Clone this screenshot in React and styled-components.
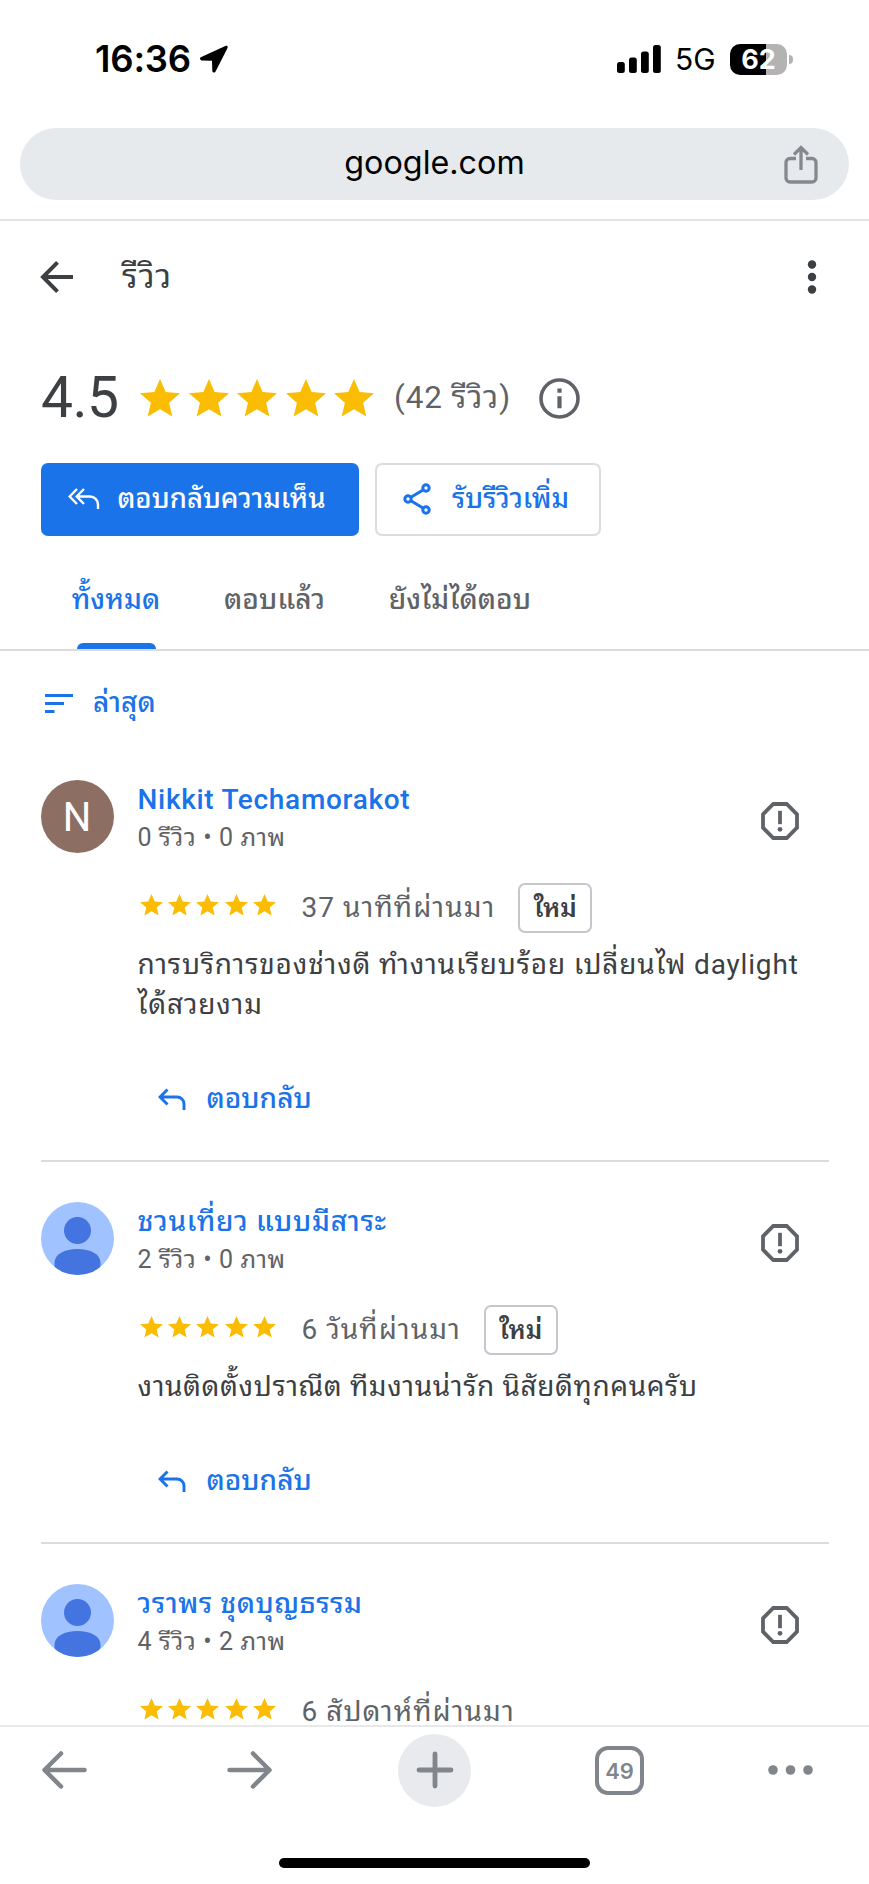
import React from 'react';
import styled, { createGlobalStyle } from 'styled-components';

const Global = createGlobalStyle`
  * { box-sizing: border-box; }
  html, body { margin: 0; padding: 0; background: #fff; }
  svg { display: block; flex: none; }
  button { border: 0; background: none; padding: 0; margin: 0; color: inherit; font: inherit; }
`;

const Screen = styled.div`
  width: 869px; height: 1884px; overflow: hidden;
  display: flex; flex-direction: column;
  background: #fff; color: #3c4043;
  font-family: Roboto, 'Noto Sans Thai Looped', Loma, Garuda, Waree, sans-serif;
`;

const Text = styled.span`
  display: block; white-space: nowrap; flex: none;
  width: ${p => (p.$w ? `${p.$w}px` : 'auto')};
  font-size: ${p => p.$size}px; line-height: ${p => p.$lh || 40}px; height: ${p => p.$lh || 40}px;
  color: ${p => p.$color || '#3c4043'};
  font-weight: ${p => p.$weight || 400};
  letter-spacing: ${p => p.$ls || 0}px;
`;

const StatusBar = styled.div`
  height: 128px; padding: 2px 76px 12px 95px; display: flex; align-items: center; flex: none;
  font-family: Inter, sans-serif; color: #000;
`;
const Clock = styled.div`font-size: 36.5px; font-weight: 600; letter-spacing: -0.2px; width: 104px;`;
const Spacer = styled.div`flex: 1;`;
const Network = styled.div`font-size: 30px; width: 53px; padding-left: 13px; line-height: 36px;`;
const Battery = styled.div`
  margin-left: 15px; width: 57px; height: 31px; border-radius: 10px; flex: none;
  background: linear-gradient(to right, #000 36px, #b3b3b3 36px);
  color: #fff; font-size: 27px; font-weight: 700; line-height: 31px; text-align: center;
`;
const BatteryTip = styled.div`width: 4px; height: 9px; margin-left: 2px; border-radius: 0 4px 4px 0; background: #b3b3b3;`;

const UrlBar = styled.div`
  margin: 0 20px; height: 72px; flex: none; border-radius: 36px; background: #e6eaed;
  display: grid; grid-template-columns: 1fr auto 1fr; align-items: center; padding: 0 31px;
  color: #000; font: 32.3px/40px Inter, sans-serif;
  svg { justify-self: end; }
`;
const Host = styled.span`padding-bottom: 2px;`;
const Rule = styled.div`height: 2px; background: #e3e4e6; margin-top: 19px; flex: none;`;

const Page = styled.main`flex: 1; min-height: 0; overflow: hidden;`;
const TitleRow = styled.header`
  height: 112px; display: flex; align-items: center; padding: 0 36px 0 36px; gap: 44px;
`;
const RatingRow = styled.div`
  height: 72px; margin-top: 29px; padding-left: 41px; display: flex; align-items: center;
`;
const Score = styled.div`font-size: 57px; line-height: 72px; width: 98px; letter-spacing: -0.5px;`;
const Stars = styled.div`display: flex; width: ${p => p.$w}px; gap: ${p => p.$gap}px; flex: none; padding-left: ${p => p.$pl || 0}px; padding-bottom: ${p => p.$pb || 0}px;`;
const Actions = styled.div`display: flex; gap: 16px; padding: 0 40.5px; margin-top: 29px;`;
const Action = styled.button`
  height: 73px; width: ${p => p.$w}px; border-radius: 7px; display: flex; align-items: center; padding: 0 0 1px ${p => p.$pl}px;
  gap: ${p => p.$gap}px;
  background: ${p => (p.$filled ? '#1a73e8' : '#fff')};
  border: ${p => (p.$filled ? '0' : '2px solid #dadce0')};
`;
const Tabs = styled.nav`
  display: flex; height: 115px; border-bottom: 2px solid #dadce0; padding-left: 73px; gap: 66px;
`;
const Tab = styled.div`
  width: ${p => p.$w}px; height: 113px; padding-top: 44px; display: flex; flex-direction: column; align-items: center; justify-content: space-between;
`;
const Indicator = styled.i`width: 79px; height: 6px; border-radius: 6px 6px 0 0; background: #1a73e8;`;
const SortRow = styled.div`height: 129px; padding: 32px 0 0 44px; display: flex; gap: 19px; align-items: flex-start;`;

const Review = styled.article`
  margin: 0 40.5px 40px; padding-bottom: 42px; border-bottom: 2px solid #dadce0;
`;
const ReviewHead = styled.div`display: flex; height: 73px; padding-right: 29.5px;`;
const Who = styled.div`flex: 1; margin-left: 24px;`;
const FlagSlot = styled.div`padding-top: 22px;`;
const Avatar = styled.div`
  width: 73px; height: 73px; border-radius: 50%; overflow: hidden; flex: none; background: ${p => p.$bg};
  color: #fff; font-size: 40px; line-height: 75px; text-align: center;
`;
const Body = styled.div`padding-left: 97px;`;
const Meta = styled.div`display: flex; align-items: center; height: 50px; margin-top: 30px;`;
const Badge = styled.div`
  margin-left: 23px; width: 74px; height: 50px; border: 2px solid #c4c7cc; border-radius: 7px;
  display: flex; justify-content: center; padding-top: 3px;
`;
const Comment = styled.p`margin: 12px 0 0; font-size: 28px; line-height: 40px; white-space: pre; letter-spacing: ${p => p.$ls || 0}px;`;
const Reply = styled.button`display: flex; align-items: center; height: 40px; gap: 21px; margin: 54px 0 -1px; padding-left: 20px;`;

const Toolbar = styled.footer`
  height: 159px; flex: none; border-top: 2px solid #e8e8ea; background: #fff;
  display: flex; flex-direction: column; align-items: center; justify-content: space-between; padding-bottom: 16px;
`;
const ToolRow = styled.div`width: 869px; height: 86px; display: flex; align-items: center; padding-left: 28px; gap: 112px;`;
const Tool = styled.div`
  width: ${p => p.$w || 73}px; height: 73px; border-radius: 50%; flex: none;
  background: ${p => (p.$round ? '#e8eaed' : 'none')}; display: grid; place-items: center;
`;
const TabCount = styled.div`
  width: 49px; height: 49px; border: 4px solid #80868b; border-radius: 13px; color: #80868b;
  font: 600 22px/43px Inter, sans-serif; text-align: center;
`;
const HomeBar = styled.div`width: 311px; height: 10px; border-radius: 5px; background: #000;`;

const BLUE = '#1a73e8';
const GREY = '#5f6368';
const TOOL = '#80868b';

const Star = ({ size }) => (
  <svg width={size} height={size * 0.94} viewBox="2 2 20 19" preserveAspectRatio="none"><path fill="#fbbc04" d="M12 17.27 18.18 21l-1.64-7.03L22 9.24l-7.19-.61L12 2 9.19 8.63 2 9.24l5.46 4.73L5.82 21z" /></svg>
);
const StarSet = ({ size, gap, width, left, lift }) => (
  <Stars $w={width} $gap={gap} $pl={left} $pb={lift}>{[0, 1, 2, 3, 4].map(i => <Star key={i} size={size} />)}</Stars>
);
const ReplyIcon = () => (
  <svg width="28" height="22" viewBox="0 0 28 22" fill="none" stroke={BLUE} strokeWidth="2.9"><path d="M9.500 1.500 2 9l7.500 7.500M2 9h17a7 7 0 0 1 7 7v6" /></svg>
);
const Flag = () => (
  <svg width="38" height="38" viewBox="0 0 38 38"><path d="M12.3 2h13.4L36 12.3v13.4L25.7 36H12.3L2 25.7V12.3z" fill="none" stroke={GREY} strokeWidth="3.8" /><path d="M17.100 8.800h3.800v13.400h-3.800z" fill={GREY} /><circle cx="19" cy="27.300" r="2.400" fill={GREY} /></svg>
);
const Person = () => (
  <svg width="73" height="73" viewBox="0 0 73 73" fill="#4374e0"><circle cx="36.5" cy="28.5" r="13.5" /><path d="M13.500 80V61c0-9 10-14 23-14s23 5 23 14v19z" /></svg>
);

const reviews = [
  { name: 'Nikkit Techamorakot', nameLs: 0.7, initial: 'N', stats: '0 รีวิว • 0 ภาพ', when: '37 นาทีที่ผ่านมา', isNew: true, text: 'การบริการของช่างดี ทำงานเรียบร้อย เปลี่ยนไฟ daylight\nได้สวยงาม', textLs: 0.83 },
  { name: 'ชวนเที่ยว แบบมีสาระ', nameLs: 0.7, stats: '2 รีวิว • 0 ภาพ', when: '6 วันที่ผ่านมา', isNew: true, text: 'งานติดตั้งปราณีต ทีมงานน่ารัก นิสัยดีทุกคนครับ', textLs: 0.6 },
  { name: 'วราพร ชุดบุญธรรม', nameLs: 0.55, stats: '4 รีวิว • 2 ภาพ', when: '6 สัปดาห์ที่ผ่านมา' },
];

export default function App() {
  return (
    <Screen>
      <Global />
      <StatusBar>
        <Clock>16:36</Clock>
        <svg width="30" height="28" viewBox="0 0 30 28"><path d="M26.300 1 2.300 12c-2 1-1.500 3.300.6 3.400l10.100.3.300 10c.1 2.100 2.500 2.500 3.400.5L28.400 3.200C29.200 1.300 28 .2 26.300 1z" fill="#000" /></svg>
        <Spacer />
        <svg width="45" height="28" viewBox="0 0 45 28"><rect x="0" y="17" width="7.800" height="11" rx="2.500" /><rect x="12" y="12.500" width="7.800" height="15.500" rx="2.500" /><rect x="24" y="6.500" width="7.800" height="21.500" rx="2.500" /><rect x="36" y="0" width="7.800" height="28" rx="2.500" /></svg>
        <Network>5G</Network>
        <Battery>62</Battery>
        <BatteryTip />
      </StatusBar>
      <UrlBar>
        <span />
        <Host>google.com</Host>
        <svg width="34" height="39" viewBox="0 0 34 39" fill="none" stroke="#85898d" strokeWidth="3.300"><path d="M12 13.500H6a4 4 0 0 0-4 4v15.500a4 4 0 0 0 4 4h22a4 4 0 0 0 4-4V17.500a4 4 0 0 0-4-4H22M17 25V3M10 9.500l7-7 7 7" /></svg>
      </UrlBar>
      <Rule />
      <Page>
        <TitleRow>
          <svg width="42" height="42" viewBox="0 0 42 42" fill="none" stroke="#3c4043" strokeWidth="4"><path d="M37 21H7.500M21.500 6.400 7 21l14.500 14.600" /></svg>
          <Text $size={33} $ls={1.1}>รีวิว</Text>
          <Spacer />
          <svg width="42" height="42" viewBox="0 0 42 42" fill="#3c4043"><circle cx="21" cy="8.500" r="4.200" /><circle cx="21" cy="21" r="4.200" /><circle cx="21" cy="33.500" r="4.200" /></svg>
        </TitleRow>
        <RatingRow>
          <Score>4.5</Score>
          <StarSet size={40} gap={8.500} width={255} left={1} />
          <Text $size={31.500} $color={GREY} $ls={0.9} $w={145}>(42 รีวิว)</Text>
          <svg width="41" height="41" viewBox="0 0 41 41"><circle cx="20.500" cy="20.500" r="18.500" fill="none" stroke={GREY} strokeWidth="3.600" /><path d="M18.400 18.300h4.200v12h-4.200zM18.400 10.600h4.200v4.200h-4.200z" fill={GREY} /></svg>
        </RatingRow>
        <Actions>
          <Action $filled $w={318.500} $pl={27} $gap={18}>
            <svg width="32" height="22" viewBox="0 0 32 22" fill="none" stroke="#fff" strokeWidth="2.400"><path d="M9 1 1.700 8.500 9 16M16 1 8.700 8.500 16 16M8.700 8.500H22a8 8 0 0 1 8 8V21" /></svg>
            <Text $size={27.500} $color="#fff" $weight={500} $ls={0}>ตอบกลับความเห็น</Text>
          </Action>
          <Action $w={226} $pl={26} $gap={21}>
            <svg width="28" height="32" viewBox="0 0 28 32" fill="none" stroke={BLUE} strokeWidth="3"><path d="M22.500 5.500 5 16l17.500 10.500" /><g fill="#fff"><circle cx="23" cy="5" r="3.200" /><circle cx="5" cy="16" r="3.200" /><circle cx="23" cy="27" r="3.200" /></g></svg>
            <Text $size={27.500} $color={BLUE} $weight={500}>รับรีวิวเพิ่ม</Text>
          </Action>
        </Actions>
        <Tabs>
          <Tab $w={86}><Text $size={28} $color={BLUE} $weight={500} $ls={0.1}>ทั้งหมด</Text><Indicator /></Tab>
          <Tab $w={99}><Text $size={28} $color={GREY} $weight={500} $ls={0.1}>ตอบแล้ว</Text></Tab>
          <Tab $w={140}><Text $size={28} $color={GREY} $weight={500} $ls={0.1}>ยังไม่ได้ตอบ</Text></Tab>
        </Tabs>
        <SortRow>
          <svg width="30" height="40" viewBox="0 0 30 40" fill={BLUE}><path d="M1 11h28v3H1zM1 19h19v3H1zM1 27h9.500v3H1z" /></svg>
          <Text $size={28} $color={BLUE} $weight={500} $ls={0.1}>ล่าสุด</Text>
        </SortRow>
        {reviews.map(r => (
          <Review key={r.name}>
            <ReviewHead>
              <Avatar $bg={r.initial ? '#8d6e63' : '#a0c2ff'}>{r.initial || <Person />}</Avatar>
              <Who>
                <Text $size={28} $lh={39} $color={BLUE} $weight={500} $ls={r.nameLs}>{r.name}</Text>
                <Text $size={25} $lh={37} $color={GREY} $ls={0.6}>{r.stats}</Text>
              </Who>
              <FlagSlot><Flag /></FlagSlot>
            </ReviewHead>
            <Body>
              <Meta>
                <StarSet size={23} gap={5.300} width={164} left={2.200} lift={6} />
                <Text $size={28} $color={GREY} $ls={1.050}>{r.when}</Text>
                {r.isNew && <Badge><Text $size={25.500} $weight={600}>ใหม่</Text></Badge>}
              </Meta>
              {r.text && <Comment $ls={r.textLs}>{r.text}</Comment>}
              {r.text && <Reply><ReplyIcon /><Text $size={28} $color={BLUE} $weight={500} $ls={0}>ตอบกลับ</Text></Reply>}
            </Body>
          </Review>
        ))}
      </Page>
      <Toolbar>
        <ToolRow>
          <Tool><svg width="47" height="40" viewBox="0 0 47 40" fill="none" stroke={TOOL} strokeWidth="4.500" strokeLinecap="round" strokeLinejoin="round"><path d="M43.500 20H4M20 3.500 3.500 20 20 36.500" /></svg></Tool>
          <Tool><svg width="47" height="40" viewBox="0 0 47 40" fill="none" stroke={TOOL} strokeWidth="4.500" strokeLinecap="round" strokeLinejoin="round"><path d="M3.500 20H43M27 3.500 43.500 20 27 36.500" /></svg></Tool>
          <Tool $round><svg width="38" height="38" viewBox="0 0 38 38" fill="none" stroke={TOOL} strokeWidth="4.800" strokeLinecap="round"><path d="M19 3v32M3 19h32" /></svg></Tool>
          <Tool><TabCount>49</TabCount></Tool>
          <Tool $w={43}><svg width="45" height="10" viewBox="0 0 45 10" fill={TOOL}><circle cx="5" cy="5" r="4.800" /><circle cx="22.500" cy="5" r="4.800" /><circle cx="40" cy="5" r="4.800" /></svg></Tool>
        </ToolRow>
        <HomeBar />
      </Toolbar>
    </Screen>
  );
}
